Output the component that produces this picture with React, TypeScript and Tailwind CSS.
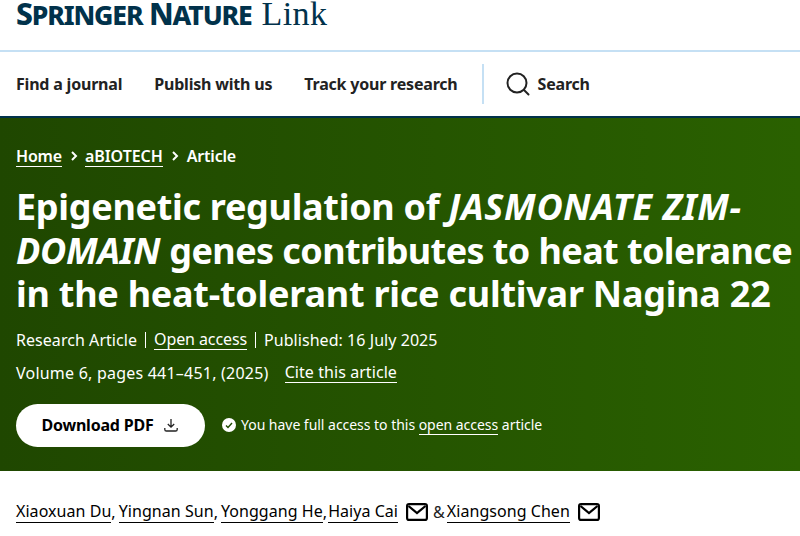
import React from "react";

const sans = "font-['Noto_Sans','Open_Sans',sans-serif]";

function Mail() {
  return (
    <svg width="22" height="18" viewBox="0 0 22 18" fill="none" stroke="#000" strokeWidth="2.2" className="ml-[8px] shrink-0">
      <rect x="1.1" y="1.1" width="19.8" height="15.8" rx="2" />
      <path d="M2.5 3l8.5 7 8.5-7" />
    </svg>
  );
}

function Author({ children }: { children: React.ReactNode }) {
  return <span className="border-b border-black leading-[21px]">{children}</span>;
}

export default function App() {
  return (
    <div className={`${sans} w-[800px] h-[536px] overflow-hidden bg-white text-[#222]`}>
      <header className="h-[52px] border-b-2 border-[#c5e0f4] px-4">
        <div className="flex items-baseline text-[#01324b]">
          <span className="font-extrabold text-[30px] tracking-[-1.15px] leading-[27px] font-['Noto_Sans'] whitespace-nowrap">
            S<span className="text-[26.5px]">PRINGER</span> N<span className="text-[26.5px]">ATURE</span>
          </span>
          <span className="ml-[10px] text-[34px] leading-[27px] font-['Liberation_Serif'] tracking-[0.4px]">Link</span>
        </div>
      </header>
      <nav className="h-[66px] border-b-2 border-[#01324b] px-4 flex items-center font-bold text-[16px] tracking-[-0.2px] pb-[1px]">
        <a className="mr-8">Find a journal</a>
        <a className="mr-8">Publish with us</a>
        <a>Track your research</a>
        <span className="w-[2px] h-10 bg-[#c5e0f4] ml-[24px] mr-[22px]" />
        <svg width="24" height="24" viewBox="0 0 24 24" fill="none" stroke="#222" strokeWidth="2" className="mr-[8px]">
          <circle cx="11" cy="11" r="9.5" />
          <path d="M18 18l4.5 4.5" strokeLinecap="round" />
        </svg>
        <a>Search</a>
      </nav>
      <section className="h-[353px] bg-gradient-to-r from-[#1f4700] to-[#2a6100] text-white px-4 pt-[27px]">
        <div className="flex items-center font-semibold text-[16px] tracking-[-0.2px] h-[22px]">
          <a className="border-b border-white leading-[20px]">Home</a>
          <svg width="10" height="12" viewBox="0 0 10 12" fill="none" stroke="#fff" strokeWidth="2" className="ml-[7px] mr-[6px]"><path d="M3 2l4 4-4 4" /></svg>
          <a className="border-b border-white leading-[20px] tracking-[-0.05px]">aBIOTECH</a>
          <svg width="10" height="12" viewBox="0 0 10 12" fill="none" stroke="#fff" strokeWidth="2" className="mx-[7px]"><path d="M3 2l4 4-4 4" /></svg>
          <span>Article</span>
        </div>
        <h1 className="mt-[18px] font-bold text-[36px] leading-[43.5px] tracking-[-0.3px] whitespace-nowrap">
          Epigenetic regulation of <i className="tracking-[0.65px]">JASMONATE ZIM-</i>
          <br />
          <i>DOMAIN</i> <span className="tracking-[-0.6px]">genes contributes to heat tolerance</span>
          <br />
          <span className="tracking-[-0.25px]">in the heat-tolerant rice cultivar Nagina 22</span>
        </h1>
        <div className="mt-[12px] flex items-center text-[16px] h-[24px] tracking-[0.05px]">
          <span>Research Article</span>
          <span className="w-px h-4 bg-white mx-2" />
          <a className="border-b border-white leading-[20px] tracking-[-0.1px]">Open access</a>
          <span className="w-px h-4 bg-white mx-2" />
          <span className="tracking-[0.05px]">Published: 16 July 2025</span>
        </div>
        <div className="mt-[9px] flex items-center text-[16px] h-[24px]">
          <span className="tracking-[0.22px]">Volume 6, pages 441–451, (2025)</span>
          <a className="ml-4 border-b border-white leading-[20px] tracking-[0.07px]">Cite this article</a>
        </div>
        <div className="mt-[19px] flex items-center">
          <a className="h-[43px] w-[189px] pr-[1px] rounded-full bg-white text-black font-bold text-[16px] tracking-[-0.2px] flex items-center justify-center">
            Download PDF
            <svg width="16" height="16" viewBox="0 0 16 16" fill="none" stroke="#222" strokeWidth="1.3" className="ml-[9px]">
              <path d="M8 2v8M4.8 7L8 10.2 11.2 7M1.8 11v1.4c0 1 .6 1.6 1.6 1.6h9.2c1 0 1.6-.6 1.6-1.6V11" />
            </svg>
          </a>
          <svg width="14" height="14" viewBox="0 0 14 14" className="ml-[17px] mr-[5px]">
            <circle cx="7" cy="7" r="7" fill="#fff" />
            <path d="M4 7.4l2 2 4-4.4" fill="none" stroke="#1f4a00" strokeWidth="1.4" />
          </svg>
          <span className="text-[14px] tracking-[-0.03px] pb-[2px]">
            You have full access to this <a className="border-b border-white">open access</a> article
          </span>
        </div>
      </section>
      <div className="mt-[28px] px-4 flex items-center text-[16px] text-black tracking-[0.05px] h-[26px] whitespace-nowrap">
        <Author>Xiaoxuan Du</Author>
        <span className="mr-[3px]">,</span>
        <Author>Yingnan Sun</Author>
        <span className="mr-[3px]">,</span>
        <Author>Yonggang He</Author>
        <span className="mr-[1px]">,</span>
        <Author>Haiya Cai</Author>
        <Mail />
        <span className="ml-[5px] mr-[2px] text-[#222]">&amp;</span>
        <Author>Xiangsong Chen</Author>
        <Mail />
      </div>
    </div>
  );
}
